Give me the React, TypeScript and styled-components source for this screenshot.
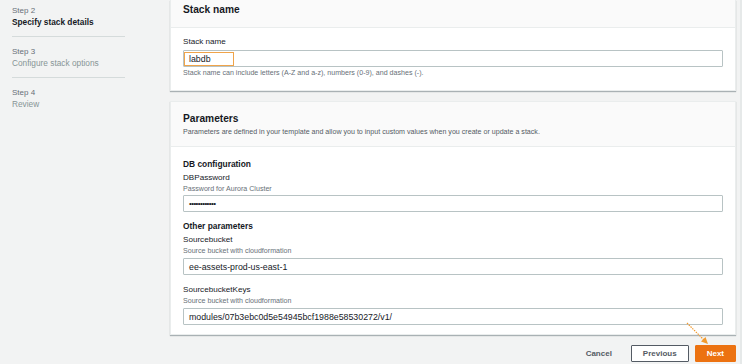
import styled, { createGlobalStyle } from "styled-components";

const GlobalStyle = createGlobalStyle`
  html, body {
    margin: 0;
    padding: 0;
    background: #f2f3f3;
    font-family: "Liberation Sans", Arial, sans-serif;
    color: #16191f;
  }
`;

const Page = styled.div`
  position: relative;
  display: flex;
  width: 742px;
  height: 364px;
  overflow: hidden;
  box-sizing: border-box;
  border-right: 2px solid #e6e9e9;
`;

const Sidebar = styled.nav`
  width: 158px;
  flex-shrink: 0;
  padding: 5px 0 0 12px;
  box-sizing: border-box;
`;

const Step = styled.div<{ last?: boolean }>`
  width: 113px;
  padding: 0 0 8px;
  margin-bottom: 9px;
  border-bottom: ${(p) => (p.last ? "none" : "1px solid #d5dbdb")};
`;

const StepNum = styled.div`
  padding-top: 1px;
  font-size: 8px;
  line-height: 10px;
  color: #687078;
`;

const StepTitle = styled.div<{ active?: boolean }>`
  font-size: 8.3px;
  line-height: 12px;
  font-weight: ${(p) => (p.active ? 700 : 400)};
  color: ${(p) => (p.active ? "#16191f" : "#879596")};
`;

const Main = styled.main`
  width: 566px;
  margin-left: 12px;
  display: flex;
  flex-direction: column;
`;

const Panel = styled.section<{ cut?: boolean }>`
  background: #fff;
  border: 1px solid #eaeded;
  border-top: ${(p) => (p.cut ? "none" : "1px solid #eaeded")};
  box-shadow: 0 1px 1px 0 rgba(0, 28, 36, 0.3);
  margin-bottom: 10px;
`;

const PanelHeader = styled.header<{ tall?: boolean }>`
  background: #fafafa;
  border-bottom: 1px solid #eaeded;
  padding: ${(p) => (p.tall ? "9px 12px 9px" : "2px 12px 9px")};
`;

const PanelTitle = styled.h2`
  margin: 0;
  font-size: 10.2px;
  line-height: 16px;
  font-weight: 700;
`;

const PanelDesc = styled.p`
  margin: 0;
  font-size: 7.1px;
  line-height: 10px;
  color: #545b64;
`;

const PanelBody = styled.div<{ pad: string }>`
  padding: ${(p) => p.pad};
`;

const GroupTitle = styled.h3`
  margin: 0 0 2px;
  font-size: 8.4px;
  line-height: 12px;
  font-weight: 700;
`;

const Field = styled.div<{ gap?: number }>`
  margin-bottom: ${(p) => p.gap ?? 0}px;
`;

const Label = styled.label`
  display: block;
  font-size: 8.1px;
  line-height: 12px;
`;

const Hint = styled.div<{ mt?: number }>`
  margin-top: ${(p) => p.mt ?? 1}px;
  font-size: 7.1px;
  line-height: 9px;
  color: #687078;
`;

const Input = styled.div<{ mt?: number }>`
  height: 17px;
  box-sizing: border-box;
  margin-top: ${(p) => p.mt ?? 2}px;
  border: 1px solid #b8c3c4;
  border-radius: 1px;
  padding: 0 5px;
  display: flex;
  align-items: center;
  font-size: 8.8px;
  color: #16191f;
`;

const Highlight = styled.span`
  display: inline-flex;
  align-items: center;
  width: 50px;
  height: 14px;
  box-sizing: border-box;
  margin-left: -5px;
  padding-left: 4px;
  border: 1.5px solid #f0a44a;
  font-size: 8.8px;
`;

const Dots = styled.span`
  letter-spacing: -0.6px;
  font-size: 8px;
`;

const Footer = styled.div`
  display: flex;
  justify-content: flex-end;
  align-items: center;
  gap: 6px;
`;

const Button = styled.button<{ variant?: "link" | "primary" }>`
  height: 17px;
  box-sizing: border-box;
  font-family: inherit;
  font-size: 8px;
  font-weight: 700;
  padding: 0 ${(p) => (p.variant === "link" ? "12px" : "11px")};
  border-radius: 1px;
  cursor: pointer;
  border: ${(p) =>
    p.variant === "link"
      ? "1px solid transparent"
      : p.variant === "primary"
      ? "1px solid #ec7211"
      : "1px solid #545b64"};
  background: ${(p) => (p.variant === "primary" ? "#ec7211" : p.variant === "link" ? "transparent" : "#fff")};
  color: ${(p) => (p.variant === "primary" ? "#fff" : "#545b64")};
`;

const Arrow = styled.svg`
  position: absolute;
  left: 684px;
  top: 320px;
  pointer-events: none;
`;

export default function App() {
  return (
    <>
      <GlobalStyle />
      <Page>
        <Sidebar>
          <Step>
            <StepNum>Step 2</StepNum>
            <StepTitle active>Specify stack details</StepTitle>
          </Step>
          <Step>
            <StepNum>Step 3</StepNum>
            <StepTitle>Configure stack options</StepTitle>
          </Step>
          <Step last>
            <StepNum>Step 4</StepNum>
            <StepTitle>Review</StepTitle>
          </Step>
        </Sidebar>

        <Main>
          <Panel cut>
            <PanelHeader>
              <PanelTitle>Stack name</PanelTitle>
            </PanelHeader>
            <PanelBody pad="8px 12px 12px">
              <Label>Stack name</Label>
              <Input mt={2}>
                <Highlight>labdb</Highlight>
              </Input>
              <Hint mt={2}>
                Stack name can include letters (A-Z and a-z), numbers (0-9), and dashes (-).
              </Hint>
            </PanelBody>
          </Panel>

          <Panel>
            <PanelHeader tall>
              <PanelTitle>Parameters</PanelTitle>
              <PanelDesc>
                Parameters are defined in your template and allow you to input custom values when you create or update a stack.
              </PanelDesc>
            </PanelHeader>
            <PanelBody pad="11px 12px 9px">
              <GroupTitle>DB configuration</GroupTitle>
              <Field gap={8}>
                <Label>DBPassword</Label>
                <Hint>Password for Aurora Cluster</Hint>
                <Input mt={1}>
                  <Dots>••••••••••••</Dots>
                </Input>
              </Field>
              <GroupTitle>Other parameters</GroupTitle>
              <Field gap={9}>
                <Label>Sourcebucket</Label>
                <Hint>Source bucket with cloudformation</Hint>
                <Input>ee-assets-prod-us-east-1</Input>
              </Field>
              <Field>
                <Label>SourcebucketKeys</Label>
                <Hint>Source bucket with cloudformation</Hint>
                <Input>modules/07b3ebc0d5e54945bcf1988e58530272/v1/</Input>
              </Field>
            </PanelBody>
          </Panel>

          <Footer>
            <Button variant="link">Cancel</Button>
            <Button>Previous</Button>
            <Button variant="primary">Next</Button>
          </Footer>
        </Main>

        <Arrow width="30" height="30" viewBox="0 0 30 30">
          <line x1="3" y1="3" x2="20" y2="20" stroke="#f29a2e" strokeWidth="1.2" strokeDasharray="1.5 1" />
          <path d="M24 24 L17 21.5 L21.5 17 Z" fill="#f29a2e" />
        </Arrow>
      </Page>
    </>
  );
}
